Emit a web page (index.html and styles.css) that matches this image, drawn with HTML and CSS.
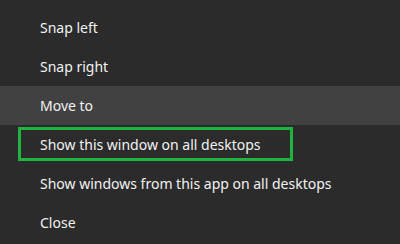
FILE: index.html
```html
<!DOCTYPE html>
<html lang="en">
<head>
  <meta charset="UTF-8">
  <title>Window menu</title>
  <link rel="stylesheet" href="styles.css">
</head>
<body>
  <ul class="menu">
    <li class="menu-item">Snap left</li>
    <li class="menu-item">Snap right</li>
    <li class="menu-item is-hover">Move to</li>
    <li class="menu-item is-focus"><span class="focus-ring">Show this window on all desktops</span></li>
    <li class="menu-item">Show windows from this app on all desktops</li>
    <li class="menu-item">Close</li>
  </ul>
</body>
</html>
```

FILE: styles.css
```css
* { margin: 0; padding: 0; box-sizing: border-box; }

body {
  width: 400px; height: 244px; overflow: hidden;
  background: #2b2b2b; color: #f2f2f2;
  font-family: 'Noto Sans', 'Open Sans', sans-serif; font-size: 14px;
  -webkit-font-smoothing: antialiased;
}

.menu { list-style: none; padding-top: 8px; }

.menu-item {
  height: 39px; line-height: 39px; padding-left: 40px;
  white-space: nowrap;
}
.menu-item.is-hover { background: #414141; }

.menu-item.is-focus { padding: 2px 0 0 18px; line-height: normal; }
.focus-ring {
  display: block; width: 275px; height: 34px; line-height: 30px;
  padding-left: 19px; border: 3px solid #1fb33f;
}
```
